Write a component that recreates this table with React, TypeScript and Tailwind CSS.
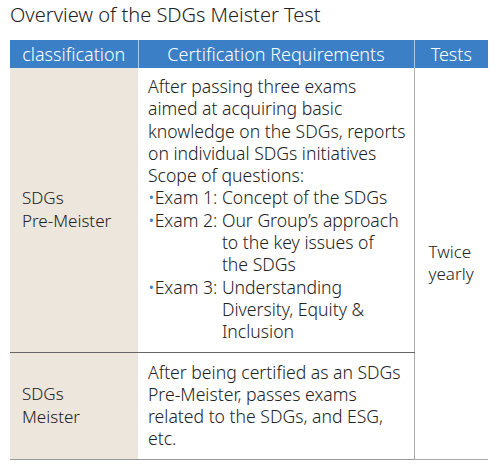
const font = { fontFamily: '"Noto Sans", "Noto Sans CJK JP", sans-serif' };

function Exam({ label, lines }: { label: string; lines: string[] }) {
  return (
    <div className="flex">
      <span className="shrink-0 whitespace-pre">
        <span className="text-[#3b7fc7]">•</span>
        {label}{' '}
      </span>
      <span>
        {lines.map((l) => (
          <span key={l} className="block whitespace-nowrap">{l}</span>
        ))}
      </span>
    </div>
  );
}

export default function App() {
  return (
    <div className="min-h-[467px] w-[500px] bg-white px-[10px] pt-[1px] font-light text-[#222]" style={font}>
      <h1 className="text-[20px] leading-[28px]">Overview of the SDGs Meister Test</h1>

      <table className="mt-[11px] w-[478px] table-fixed border-collapse text-[17px] leading-[22.3px]">
        <colgroup>
          <col className="w-[128px]" />
          <col className="w-[276px]" />
          <col className="w-[74px]" />
        </colgroup>
        <thead>
          <tr className="h-[28px] bg-[#3b7fc7] text-[18px] text-white">
            <th className="p-0 text-center font-light">classification</th>
            <th className="border-l border-[#a9c8ea] p-0 text-center font-light">Certification Requirements</th>
            <th className="border-l border-[#a9c8ea] p-0 text-center font-light">Tests</th>
          </tr>
        </thead>
        <tbody>
          <tr className="h-[284px]">
            <td className="border-b border-[#666] bg-[#ece6dd] pl-[12px] align-middle">
              SDGs
              <br />
              Pre-Meister
            </td>
            <td className="border-b border-[#666] pl-[10px] pr-[2px] pt-[7px] align-top text-[17.6px]">
              <span className="block whitespace-nowrap">After passing three exams</span>
              <span className="block whitespace-nowrap">aimed at acquiring basic</span>
              <span className="block whitespace-nowrap">knowledge on the SDGs, reports</span>
              <span className="block whitespace-nowrap">on individual SDGs initiatives</span>
              <span className="block whitespace-nowrap">Scope of questions:</span>
              <Exam label="Exam 1:" lines={['Concept of the SDGs']} />
              <Exam label="Exam 2:" lines={['Our Group’s approach', 'to the key issues of', 'the SDGs']} />
              <Exam label="Exam 3:" lines={['Understanding', 'Diversity, Equity &', 'Inclusion']} />
            </td>
            <td rowSpan={2} className="border-b border-l border-[#aaa] pl-[14px] align-middle">
              Twice
              <br />
              yearly
            </td>
          </tr>
          <tr className="h-[107px]">
            <td className="border-b border-[#999] bg-[#ece6dd] pl-[12px] align-middle">
              SDGs
              <br />
              Meister
            </td>
            <td className="border-b border-[#999] pl-[10px] pr-[2px] pt-[8px] align-top text-[17.6px]">
              <span className="block whitespace-nowrap">After being certified as an SDGs</span>
              <span className="block whitespace-nowrap">Pre-Meister, passes exams</span>
              <span className="block whitespace-nowrap">related to the SDGs, and ESG,</span>
              <span className="block whitespace-nowrap">etc.</span>
            </td>
          </tr>
        </tbody>
      </table>
    </div>
  );
}
